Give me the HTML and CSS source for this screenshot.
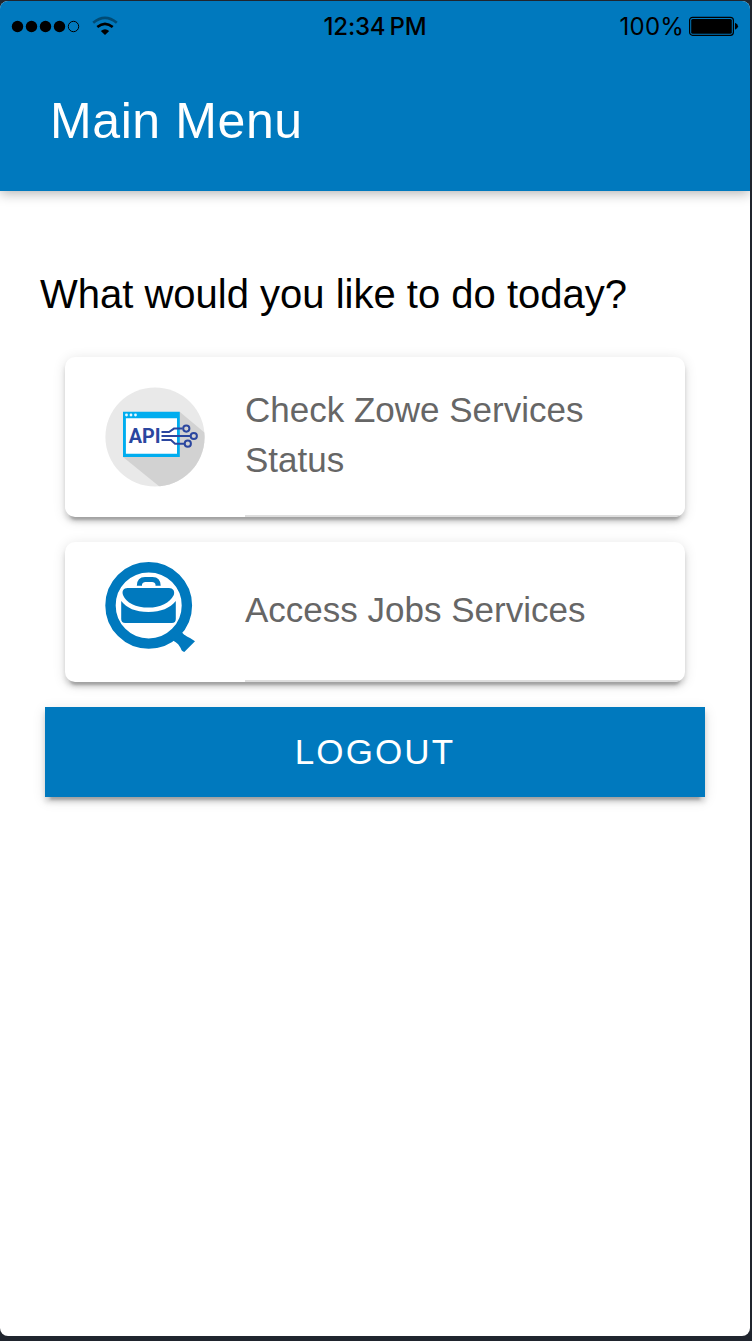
FILE: index.html
```html
<!DOCTYPE html>
<html lang="en">
<head>
<meta charset="utf-8">
<title>Main Menu</title>
<link rel="stylesheet" href="styles.css">
</head>
<body>
<div class="screen">
  <header class="header">
    <div class="statusbar">
      <div class="signal">
        <svg width="110" height="24" viewBox="0 0 110 24">
          <g><circle cx="6.5" cy="12.5" r="5.7"/><circle cx="20.5" cy="12.5" r="5.7"/><circle cx="34.5" cy="12.5" r="5.7"/><circle cx="48.5" cy="12.5" r="5.7"/><circle cx="62.5" cy="12.5" r="5.2" fill="none" stroke="#000"/></g>
          <path d="M82.2 8.8Q94 -1 105.8 8.8" fill="none" stroke="#004b75" stroke-width="2.7"/>
          <path d="M86.3 13Q94 6.7 101.7 13" fill="none" stroke="#000" stroke-width="2.7"/>
          <path d="M89.8 16.9Q94 13.4 98.2 16.9L94 21Z"/>
        </svg>
      </div>
      <div class="clock">12:34 PM</div>
      <div class="power">
        <span>100%</span>
        <svg width="50" height="20" viewBox="0 0 50 20">
          <rect x=".6" y="1.3" width="43.8" height="18" rx="3" fill="none" stroke="#000" stroke-width="1.2"/>
          <rect x="2.2" y="2.9" width="40.6" height="14.8" rx="1.5"/>
          <path d="M46 6.8Q49 8 49 10.3T46 13.8Z"/>
        </svg>
      </div>
    </div>
    <h1 class="title">Main Menu</h1>
  </header>
  <main class="content">
    <h2 class="question">What would you like to do today?</h2>
    <div class="card card-tall">
      <svg class="icon" width="100" height="100" viewBox="0 0 100 100">
        <defs><clipPath id="disc"><circle cx="50" cy="50" r="49.6"/></clipPath></defs>
        <circle cx="50" cy="50" r="49.6" fill="#e9e9e9"/>
        <path clip-path="url(#disc)" d="M75 25L100 46V100H55L18 70Z" fill="#d2d2d2"/>
        <path d="M18 24.7H74.8V70H18Z" fill="#00adef"/>
        <path d="M20.9 31.3H72V66.8H20.9Z" fill="#fff"/>
        <g fill="#e7f8ff"><circle cx="21.5" cy="28" r="1.4"/><circle cx="26" cy="28" r="1.4"/><circle cx="30.5" cy="28" r="1.4"/></g>
        <g fill="none" stroke="#2b469f" stroke-width="2"><path d="M56.5 45H64L69 41.6H77.5M56.5 49H85M56.5 53H66L70 56.7H79"/><circle cx="81.3" cy="41.6" r="3.1"/><circle cx="88.8" cy="49" r="3.1"/><circle cx="82.8" cy="56.7" r="3.1"/></g>
        <text class="api" x="23.7" y="56" textLength="31.8" lengthAdjust="spacingAndGlyphs">API</text>
      </svg>
      <div class="label">Check Zowe Services Status</div>
    </div>
    <div class="card">
      <svg class="icon" width="100" height="100" viewBox="0 0 100 100">
        <circle cx="43.7" cy="43.4" r="38.2" fill="none" stroke="#0079be" stroke-width="10.4"/>
        <g fill="#0079be">
          <path d="M65 77L75 67C77 72 81 74 85 76L90 79.2L79.3 90C76 89 76.5 87 75 85C73 81 69 79 65 77Z"/>
          <path d="M31.8 23.8Q32 15 40 15H47.5Q55.5 15 55.7 23.8H50.5V22.5Q50 20 47 20H40.5Q37.5 20 37 22.5V23.8Z"/>
          <path d="M22.5 26H64C68 26 70 29 68.8 33C65 41 55 45.6 43.5 45.6C31 45.6 21 41 18 33C16.6 29 18.5 26 22.5 26Z"/>
          <path d="M16.2 39C22 46 30 50 43.5 50C56 50 65 46 70.8 39V57Q70.8 61 66.8 61H20.2Q16.2 61 16.2 57Z"/>
        </g>
      </svg>
      <div class="label">Access Jobs Services</div>
    </div>
    <button class="logout" type="button">LOGOUT</button>
  </main>
</div>
</body>
</html>
```

FILE: styles.css
```css
* { box-sizing: border-box; }
body {
  margin: 0;
  padding: 1px 2px 5px 0;
  height: 1341px;
  background: #20252e;
  font-family: "Liberation Sans", Arial, sans-serif;
}
.screen {
  width: 750px;
  height: 1335px;
  border-radius: 8px;
  background: #fff;
  overflow: hidden;
}
.header {
  height: 190px;
  background: #0079be;
  box-shadow: 0 2px 12px rgba(0, 0, 0, .32);
}
.statusbar {
  height: 50px;
  padding: 0 11px 0 11px;
  display: grid;
  grid-template-columns: 1fr auto 1fr;
  align-items: center;
  font-family: Inter, sans-serif;
  font-size: 24px;
  color: #000;
}
.statusbar svg { display: block; }
.clock { font-weight: 500; font-size: 24px; letter-spacing: -.2px; word-spacing: -2px; }
.power {
  display: flex;
  align-items: center;
  justify-content: flex-end;
  gap: 5px;
  letter-spacing: .2px;
}
.title {
  margin: 0;
  padding-left: 50px;
  font-size: 50px;
  font-weight: 400;
  line-height: 140px;
  letter-spacing: .6px;
  color: #fff;
}
.content { padding: 78px 45px 0; }
.question {
  margin: 0 0 38px -5px;
  font-size: 40px;
  line-height: 50px;
  font-weight: 400;
  color: #000;
  white-space: nowrap;
}
.card,
.logout {
  box-shadow: 0 5px 5px rgba(0, 0, 0, .14), 0 7.5px 2.5px -5px rgba(0, 0, 0, .2), 0 2.5px 12.5px rgba(0, 0, 0, .12);
}
.card {
  margin: 0 20px 25px;
  height: 140px;
  display: flex;
  border-radius: 10px;
  background: #fff;
  overflow: hidden;
}
.card-tall { height: 160px; }
.icon {
  flex: none;
  align-self: center;
  margin: 0 40px;
}
.api { font: 700 20px Roboto, sans-serif; fill: #2b469f; }
.label {
  flex: 1;
  display: flex;
  align-items: center;
  padding: 0 60px 2px 0;
  border-bottom: 2px solid #dedede;
  font-size: 35px;
  line-height: 50px;
  color: #666;
}
.logout {
  display: block;
  width: 660px;
  height: 90px;
  border: 0;
  background: #0079be;
  color: #fff;
  font: 400 35px "Liberation Sans", Arial, sans-serif;
  letter-spacing: 2.1px;
}
```
